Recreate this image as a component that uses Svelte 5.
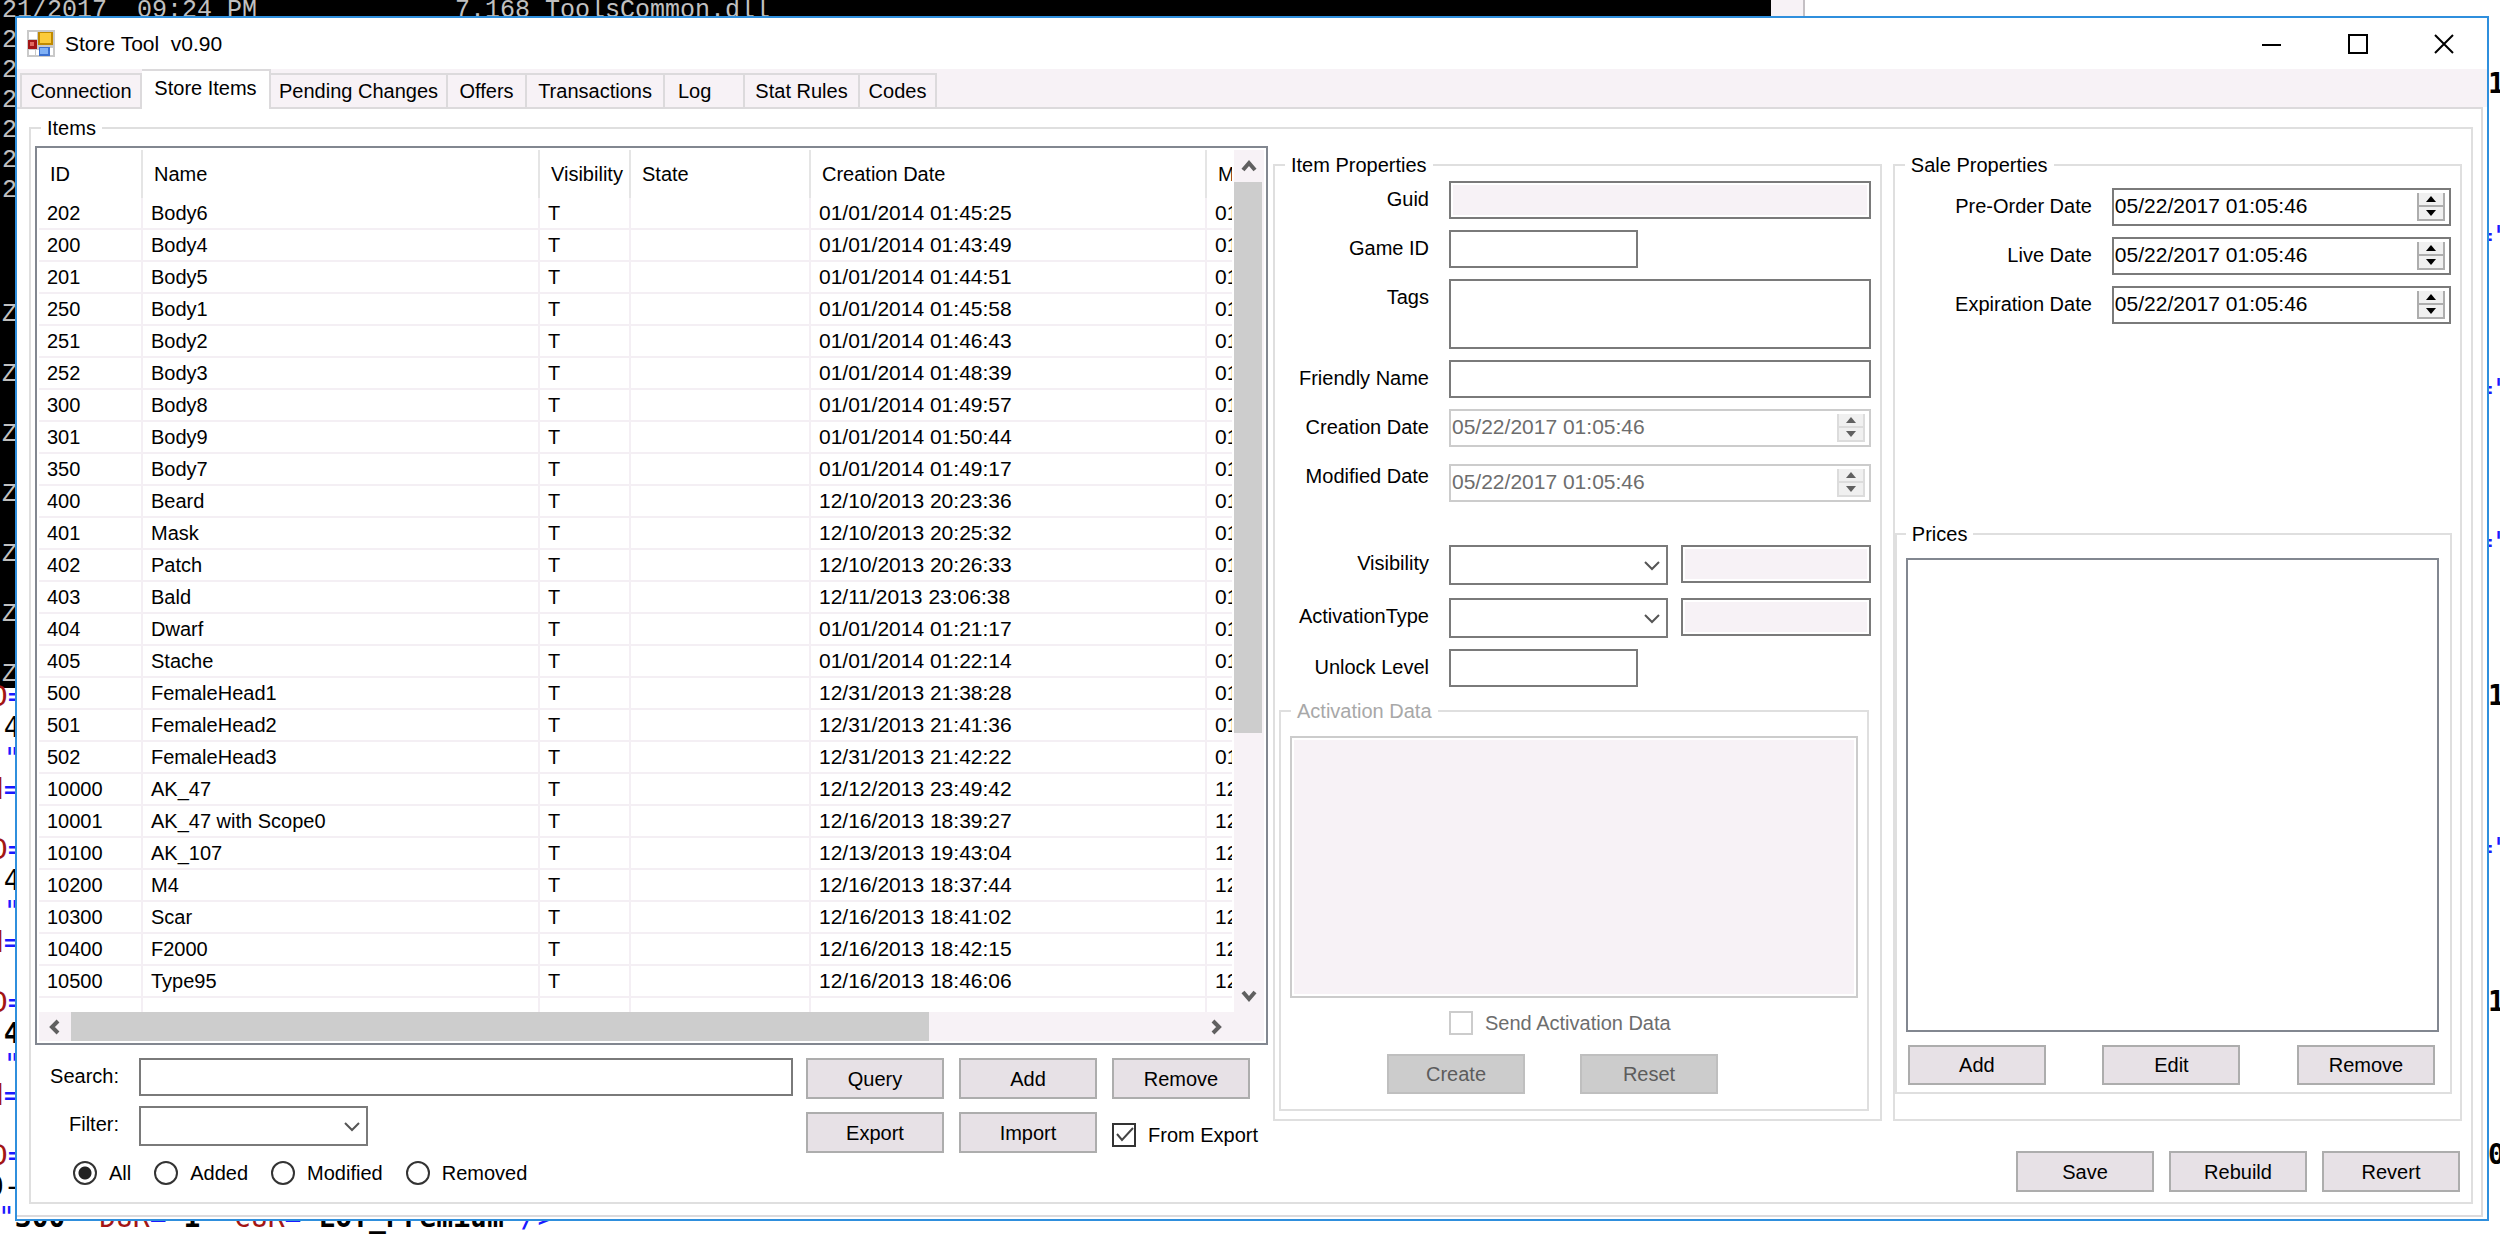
<script>
	const tabs = [
		{ label: 'Connection', width: 122 },
		{ label: 'Store Items', width: 129 },
		{ label: 'Pending Changes', width: 177 },
		{ label: 'Offers', width: 79 },
		{ label: 'Transactions', width: 138 },
		{ label: 'Log', width: 80 },
		{ label: 'Stat Rules', width: 115 },
		{ label: 'Codes', width: 77 }
	];

	const items = [
		['202', 'Body6', '01/01/2014 01:45:25', '01'],
		['200', 'Body4', '01/01/2014 01:43:49', '01'],
		['201', 'Body5', '01/01/2014 01:44:51', '01'],
		['250', 'Body1', '01/01/2014 01:45:58', '01'],
		['251', 'Body2', '01/01/2014 01:46:43', '01'],
		['252', 'Body3', '01/01/2014 01:48:39', '01'],
		['300', 'Body8', '01/01/2014 01:49:57', '01'],
		['301', 'Body9', '01/01/2014 01:50:44', '01'],
		['350', 'Body7', '01/01/2014 01:49:17', '01'],
		['400', 'Beard', '12/10/2013 20:23:36', '01'],
		['401', 'Mask', '12/10/2013 20:25:32', '01'],
		['402', 'Patch', '12/10/2013 20:26:33', '01'],
		['403', 'Bald', '12/11/2013 23:06:38', '01'],
		['404', 'Dwarf', '01/01/2014 01:21:17', '01'],
		['405', 'Stache', '01/01/2014 01:22:14', '01'],
		['500', 'FemaleHead1', '12/31/2013 21:38:28', '01'],
		['501', 'FemaleHead2', '12/31/2013 21:41:36', '01'],
		['502', 'FemaleHead3', '12/31/2013 21:42:22', '01'],
		['10000', 'AK_47', '12/12/2013 23:49:42', '12'],
		['10001', 'AK_47 with Scope0', '12/16/2013 18:39:27', '12'],
		['10100', 'AK_107', '12/13/2013 19:43:04', '12'],
		['10200', 'M4', '12/16/2013 18:37:44', '12'],
		['10300', 'Scar', '12/16/2013 18:41:02', '12'],
		['10400', 'F2000', '12/16/2013 18:42:15', '12'],
		['10500', 'Type95', '12/16/2013 18:46:06', '12']
	];

	const filters = ['All', 'Added', 'Modified', 'Removed'];
	const now = '05/22/2017 01:05:46';

	let activeTab = $state('Store Items');
	let shown = $state('All');
	let fromExport = $state(true);
</script>

{#snippet dateField(id, disabled)}
	<div class="date" class:disabled>
		<input {id} type="text" value={now} {disabled} />
		<div class="spin">
			<button type="button" aria-label="Up" {disabled}>
				<svg width="10" height="6" viewBox="0 0 10 6"><path d="M5 0 L10 6 H0 Z" /></svg>
			</button>
			<button type="button" aria-label="Down" {disabled}>
				<svg width="10" height="6" viewBox="0 0 10 6"><path d="M0 0 H10 L5 6 Z" /></svg>
			</button>
		</div>
	</div>
{/snippet}

{#snippet dropdown(id)}
	<div class="dropdown">
		<select {id}><option value=""></option></select>
		<svg width="16" height="12" viewBox="0 0 16 12"><path d="M1 2 L8 9 L15 2" /></svg>
	</div>
{/snippet}

{#snippet chevron(d)}
	<svg width="18" height="18" viewBox="0 0 18 18"><path {d} /></svg>
{/snippet}

<div class="desktop">
	<div class="console">
		<div class="dir">21/2017&nbsp; 09:24 PM<span>7.168 ToolsCommon.dll</span></div>
		<div class="twos">
			{#each { length: 6 } as _}<span>2</span>{/each}
		</div>
		<div class="zs">
			{#each { length: 7 } as _}<span>Z</span>{/each}
		</div>
	</div>
	<div class="console-scroll"></div>

	<div class="editor left">
		{#each ['-4', '-4', '4', '0-'] as tail, i}
			<div class="block">
				<span><i>D</i><b>=</b></span>
				<span class="shift" class:strong={i === 2}>{i === 2 ? '\u00a0' : ''}{tail}</span>
				{#if i < 3}
					<span class="shift"><b>."</b></span>
					<span class="shift"><i>d</i><b>=</b></span>
				{:else}
					<span class="last"><b>"</b><strong>300</strong><b>"</b> <i>DUR</i><b>="</b><strong>1</strong><b>"</b> <i>CUR</i><b>="</b><strong>LOT_Premium</strong><b>"/&gt;</b></span>
				{/if}
			</div>
		{/each}
	</div>
	<div class="editor right">
		{#each ['1', '="', '="', '="', '1', '="', '1', '0'] as ch}
			<div class="block"><span class:strong={ch.length === 1} class:blue={ch.length > 1}>{ch}</span></div>
		{/each}
	</div>

	<main class="window">
		<header class="titlebar">
			<svg class="app-icon" width="28" height="27" viewBox="0 0 28 27">
				<rect width="28" height="27" fill="#c9c9c9" />
				<rect x="2" y="2" width="8" height="7" fill="#fff" />
				<rect x="2" y="20" width="6" height="5" fill="#fff" />
				<rect x="9" y="20" width="3" height="5" fill="#fff" />
				<rect x="22" y="18" width="4" height="7" fill="#fff" />
				<rect x="11" y="2" width="15" height="13" fill="#c08a00" />
				<rect x="13" y="3" width="11" height="10" fill="#fccb3a" />
				<rect x="1" y="10" width="9" height="9" fill="#a31515" />
				<rect x="3" y="12" width="4" height="4" fill="#e06a60" />
				<rect x="12" y="17" width="11" height="9" fill="#3a6fd0" />
				<rect x="13" y="18" width="8" height="6" fill="#7fb0f5" />
			</svg>
			<h1>Store Tool&nbsp; v0.90</h1>
			<div class="window-buttons">
				<button type="button" aria-label="Minimize">
					<svg width="20" height="20" viewBox="0 0 20 20"><path d="M0 11 H19" /></svg>
				</button>
				<button type="button" aria-label="Maximize">
					<svg width="20" height="20" viewBox="0 0 20 20"><rect x="1" y="1" width="18" height="18" /></svg>
				</button>
				<button type="button" aria-label="Close">
					<svg width="20" height="20" viewBox="0 0 20 20"><path d="M1 1 L19 19 M19 1 L1 19" /></svg>
				</button>
			</div>
		</header>

		<nav class="tabs">
			{#each tabs as tab}
				<button
					type="button"
					class:active={activeTab === tab.label}
					class:short={tab.label === 'Log'}
					style:width="{tab.width}px"
					onclick={() => (activeTab = tab.label)}
				>{tab.label}</button>
			{/each}
		</nav>

		<div class="page">
			<fieldset class="items">
				<legend>Items</legend>
				<div class="columns">
					<section class="list">
						<div class="grid-box">
							<div class="grid-view">
								<table>
									<colgroup>
										<col class="c-id" /><col class="c-name" /><col class="c-vis" />
										<col class="c-state" /><col class="c-created" /><col />
									</colgroup>
									<thead>
										<tr>
											<th>ID</th>
											<th>Name</th>
											<th>Visibility</th>
											<th>State</th>
											<th>Creation Date</th>
											<th>M</th>
										</tr>
									</thead>
									<tbody>
										{#each items as [id, name, created, modified]}
											<tr>
												<td>{id}</td>
												<td>{name}</td>
												<td>T</td>
												<td></td>
												<td class="stamp">{created}</td>
												<td class="stamp">{modified}</td>
											</tr>
										{/each}
										<tr class="rest"><td></td><td></td><td></td><td></td><td></td><td></td></tr>
									</tbody>
								</table>
								<div class="vscroll">
									<button type="button" aria-label="Scroll up">{@render chevron('M3 13 L9 6 L15 13')}</button>
									<div class="vtrack"><div class="vthumb"></div></div>
									<button type="button" aria-label="Scroll down">{@render chevron('M3 5 L9 12 L15 5')}</button>
								</div>
							</div>
							<div class="hscroll">
								<button type="button" aria-label="Scroll left">{@render chevron('M12 3 L6 9 L12 15')}</button>
								<div class="htrack"><div class="hthumb"></div></div>
								<button type="button" aria-label="Scroll right">{@render chevron('M6 3 L12 9 L6 15')}</button>
							</div>
						</div>

						<div class="query">
							<div class="search">
								<label for="search">Search:</label>
								<input id="search" type="text" />
								<label for="filter">Filter:</label>
								<div class="filter">{@render dropdown('filter')}</div>
								<div class="radios">
									{#each filters as name}
										<label><input type="radio" name="shown" value={name} bind:group={shown} />{name}</label>
									{/each}
								</div>
							</div>
							<div class="actions">
								<button type="button" class="btn">Query</button>
								<button type="button" class="btn">Add</button>
								<button type="button" class="btn">Remove</button>
								<button type="button" class="btn">Export</button>
								<button type="button" class="btn">Import</button>
								<label class="check">
									<input type="checkbox" bind:checked={fromExport} />
									<svg width="21" height="21" viewBox="0 0 21 21"><path d="M3 10 L8 16 L19 4" /></svg>
									From Export
								</label>
							</div>
						</div>
					</section>

					<section class="details">
						<div class="groups">
							<fieldset class="item-props">
								<legend>Item Properties</legend>
								<div class="fields">
									<label for="guid">Guid</label>
									<input id="guid" type="text" readonly />
									<label for="game-id">Game ID</label>
									<input id="game-id" class="half" type="text" />
									<label for="tags">Tags</label>
									<textarea id="tags"></textarea>
									<label for="friendly">Friendly Name</label>
									<input id="friendly" type="text" />
									<label for="created">Creation Date</label>
									{@render dateField('created', true)}
									<label for="modified">Modified Date</label>
									<div class="lowered">{@render dateField('modified', true)}</div>
									<label class="spaced" for="visibility">Visibility</label>
									<div class="pair spaced">
										{@render dropdown('visibility')}
										<input type="text" aria-label="Visibility value" readonly />
									</div>
									<label class="activation-type" for="activation">ActivationType</label>
									<div class="pair activation-type">
										{@render dropdown('activation')}
										<input type="text" aria-label="Activation value" readonly />
									</div>
									<label for="unlock">Unlock Level</label>
									<input id="unlock" class="half" type="text" />
								</div>

								<fieldset class="activation" disabled>
									<legend>Activation Data</legend>
									<textarea aria-label="Activation Data"></textarea>
									<label class="check">
										<input type="checkbox" />
										Send Activation Data
									</label>
									<div class="activation-buttons">
										<button type="button" class="btn">Create</button>
										<button type="button" class="btn">Reset</button>
									</div>
								</fieldset>
							</fieldset>

							<fieldset class="sale-props">
								<legend>Sale Properties</legend>
								<div class="fields">
									<label for="preorder">Pre-Order Date</label>
									{@render dateField('preorder', false)}
									<label for="live">Live Date</label>
									{@render dateField('live', false)}
									<label for="expires">Expiration Date</label>
									{@render dateField('expires', false)}
								</div>
								<fieldset class="prices">
									<legend>Prices</legend>
									<div class="price-list"></div>
									<div class="price-buttons">
										<button type="button" class="btn">Add</button>
										<button type="button" class="btn">Edit</button>
										<button type="button" class="btn">Remove</button>
									</div>
								</fieldset>
							</fieldset>
						</div>
						<div class="footer">
							<button type="button" class="btn">Save</button>
							<button type="button" class="btn">Rebuild</button>
							<button type="button" class="btn">Revert</button>
						</div>
					</section>
				</div>
			</fieldset>
		</div>
	</main>
</div>

<style>
	:global(body) {
		background: #fff;
	}

	.desktop {
		position: relative;
		overflow: hidden;
		padding: 16px 11px 15px 15px;
		color: #000;
		font: 20px/24px 'Liberation Sans', Arial, sans-serif;
	}

	.desktop :is(*, *::before, *::after) {
		box-sizing: border-box;
	}

	button,
	input,
	select,
	textarea {
		margin: 0;
		padding: 0;
		border-radius: 0;
		font: inherit;
		color: inherit;
	}

	/* windows lying behind the tool */
	.console {
		position: absolute;
		top: 0;
		left: 0;
		width: 71%;
		height: 688px;
		padding-left: 2px;
		background: #000;
		color: #c0c0c0;
		font: 25px/30px 'Liberation Mono', monospace;
	}

	.dir {
		display: flex;
		gap: 198px;
		margin-top: -4px;
	}

	.twos,
	.zs {
		display: flex;
		flex-direction: column;
	}

	.zs {
		margin-top: 79px;
		line-height: 60px;
	}

	.console-scroll {
		position: absolute;
		top: 0;
		left: 71%;
		width: 34px;
		height: 17px;
		margin-left: -4px;
		background: #f7f2f6;
		border-right: 2px solid #c4c0c4;
	}

	.editor {
		position: absolute;
		font: 28px/31px 'DejaVu Sans Mono', monospace;
		white-space: nowrap;
	}

	.editor.left {
		top: 681px;
		left: -9px;
	}

	.editor.right {
		top: 68px;
		left: calc(100% - 12px);
	}

	.block {
		height: 153px;
	}

	.block > span {
		display: block;
	}

	.editor i {
		color: #a31515;
		font-style: normal;
	}

	.editor b,
	.blue {
		color: #1a1aff;
		font-weight: normal;
	}

	.strong {
		font-weight: bold;
	}

	.shift {
		margin-left: -4px;
	}

	.right .blue {
		margin-left: -12px;
	}

	.last {
		margin-left: 7px;
	}

	/* window frame */
	.window {
		position: relative;
		background: #fff;
		border: 2px solid #2f8fdd;
	}

	.titlebar {
		display: flex;
		align-items: center;
		height: 51px;
		padding-left: 10px;
	}

	h1 {
		margin: 0 0 0 10px;
		font-size: 21px;
		font-weight: normal;
	}

	.window-buttons {
		display: flex;
		margin-left: auto;
	}

	.window-buttons button {
		display: flex;
		align-items: center;
		justify-content: center;
		width: 86px;
		height: 51px;
		background: none;
		border: 0;
	}

	.window-buttons svg {
		fill: none;
		stroke: #000;
		stroke-width: 2;
	}

	.tabs {
		display: flex;
		align-items: flex-end;
		height: 38px;
		padding-left: 3px;
		background: #f7f2f6;
	}

	.tabs button {
		height: 34px;
		background: #f7f2f6;
		border: solid #dcdadc;
		border-width: 2px 2px 0 0;
		white-space: nowrap;
	}

	.tabs button:first-child {
		border-left-width: 2px;
	}

	.tabs button.active {
		z-index: 1;
		height: 40px;
		margin-bottom: -2px;
		padding-bottom: 4px;
		background: #fff;
	}

	.tabs button.short {
		padding-left: 13px;
		text-align: left;
	}

	.page {
		margin: 0 4px 2px 0;
		padding: 7px 8px 11px 12px;
		border: solid #dcdadc;
		border-width: 2px 2px 2px 0;
	}

	/* group boxes */
	fieldset {
		min-width: 0;
		margin: 0;
		padding: 0;
		border: 2px solid #dfdfdf;
	}

	legend {
		margin-left: 10px;
		padding: 0 6px;
		line-height: 24px;
	}

	.items {
		padding: 6px 9px 10px 4px;
	}

	.items > legend {
		margin-left: 6px;
	}

	.columns {
		display: flex;
		gap: 5px;
	}

	.list {
		flex: 1233 1 0;
		min-width: 0;
	}

	.details {
		display: flex;
		flex: 1189 1 0;
		flex-direction: column;
		min-width: 0;
		padding-top: 7px;
	}

	/* item grid */
	.grid-box {
		padding: 2px;
		border: 2px solid #828790;
	}

	.grid-view {
		display: flex;
	}

	table {
		flex: 1;
		width: 0;
		margin-right: 2px;
		table-layout: fixed;
		border-collapse: separate;
		border-spacing: 0;
	}

	.c-id {
		width: 104px;
	}

	.c-name {
		width: 397px;
	}

	.c-vis {
		width: 91px;
	}

	.c-state {
		width: 180px;
	}

	.c-created {
		width: 396px;
	}

	th {
		height: 48px;
		padding: 0 0 0 11px;
		border-right: 2px solid #e5e5e5;
		font-weight: normal;
		text-align: left;
		overflow: hidden;
		white-space: nowrap;
	}

	td {
		height: 32px;
		padding: 0 0 0 8px;
		border: solid #f4eff4;
		border-width: 0 2px 2px 0;
		line-height: 24px;
		overflow: hidden;
		white-space: nowrap;
	}

	.stamp {
		font-size: 21px;
	}

	.rest td {
		height: 14px;
		border-bottom: 0;
	}

	th:last-child,
	td:last-child {
		border-right: 0;
	}

	.vscroll {
		display: flex;
		flex-direction: column;
		width: 30px;
		background: #f7f2f6;
	}

	.vscroll button,
	.hscroll button {
		display: flex;
		align-items: center;
		justify-content: center;
		width: 30px;
		height: 32px;
		background: none;
		border: 0;
	}

	.vscroll svg,
	.hscroll svg {
		fill: none;
		stroke: #606060;
		stroke-width: 4;
	}

	.vtrack {
		flex: 1;
	}

	.vthumb {
		width: 28px;
		height: 69%;
		background: #cdcdcd;
	}

	.hscroll {
		display: flex;
		height: 29px;
		padding-right: 32px;
		background: #f7f2f6;
	}

	.hscroll button {
		width: 32px;
		height: 29px;
	}

	.htrack {
		flex: 1;
	}

	.hthumb {
		width: 76%;
		height: 29px;
		background: #cdcdcd;
	}

	/* controls */
	input[type='text'],
	textarea,
	select {
		display: block;
		width: 100%;
		height: 38px;
		background: #fff;
		border: 2px solid #7a7a7a;
	}

	textarea {
		height: 70px;
		resize: none;
	}

	input[readonly] {
		background: #f7f2f6;
		box-shadow: inset 0 0 0 2px #fff;
	}

	.dropdown {
		position: relative;
	}

	select {
		height: 40px;
		appearance: none;
	}

	.dropdown svg {
		position: absolute;
		top: 15px;
		right: 8px;
		fill: none;
		stroke: #555;
		stroke-width: 2;
		pointer-events: none;
	}

	.btn {
		width: 138px;
		height: 40px;
		background: #e7e1e6;
		border: 2px solid #adadad;
	}

	.btn:disabled {
		background: #ccc;
		border-color: #bfbfbf;
		color: #5c5c5c;
	}

	input[type='radio'],
	input[type='checkbox'] {
		flex: none;
		width: 24px;
		height: 24px;
		appearance: none;
		background: #fff;
		border: 2px solid #333;
	}

	input[type='radio'] {
		border-radius: 50%;
	}

	input[type='radio']:checked {
		background: radial-gradient(circle, #222 6px, #fff 7px);
	}

	.check {
		position: relative;
		display: flex;
		align-items: center;
		gap: 12px;
		white-space: nowrap;
	}

	.check svg {
		position: absolute;
		left: 2px;
		fill: none;
		stroke: #444;
		stroke-width: 2;
		pointer-events: none;
	}

	.date {
		display: flex;
		align-items: center;
		height: 38px;
		padding-right: 4px;
		background: #fff;
		border: 2px solid #7a7a7a;
		font-size: 21px;
	}

	.date input[type='text'] {
		flex: 1;
		min-width: 0;
		height: 32px;
		padding: 0 0 2px 1px;
		border: 0;
	}

	.spin {
		width: 28px;
	}

	.spin button {
		display: flex;
		align-items: center;
		justify-content: center;
		width: 28px;
		height: 14px;
		background: #f0f0f0;
		border: solid #adadad;
		border-width: 0 2px 2px;
	}

	.date.disabled {
		border-color: #ccc;
		color: #6d6d6d;
	}

	.date.disabled svg {
		fill: #606060;
	}

	.date.disabled button {
		border-color: #dcdcdc;
	}

	/* below the grid */
	.query {
		display: flex;
		gap: 13px;
		padding: 13px 18px 0 0;
	}

	.search {
		display: grid;
		flex: 1;
		grid-template-columns: 104px 1fr;
		align-content: start;
		row-gap: 10px;
	}

	.search > label {
		padding-right: 20px;
		line-height: 36px;
		text-align: right;
	}

	.filter {
		width: 229px;
	}

	.radios {
		display: flex;
		grid-column: 1 / -1;
		gap: 23px;
		padding: 5px 0 0 38px;
	}

	.radios label {
		display: flex;
		align-items: center;
		gap: 12px;
	}

	.actions {
		display: grid;
		grid-template-columns: repeat(3, 138px);
		align-content: start;
		gap: 13px 15px;
	}

	.actions .btn {
		height: 41px;
	}

	.actions .check {
		padding-top: 4px;
	}

	/* right side groups */
	.groups {
		display: flex;
		gap: 11px;
	}

	.item-props {
		flex: 609 1 0;
		padding-bottom: 8px;
	}

	.sale-props {
		flex: 569 1 0;
	}

	.fields {
		display: grid;
		grid-template-columns: 174px 1fr;
		row-gap: 11px;
		padding: 4px 9px 0 0;
	}

	.fields > label {
		padding-right: 20px;
		line-height: 36px;
		text-align: right;
	}

	.sale-props .fields {
		grid-template-columns: 217px 1fr;
		padding-top: 11px;
	}

	.half[type='text'] {
		width: 189px;
	}

	.lowered {
		padding-top: 6px;
	}

	.spaced {
		margin-top: 32px;
	}

	.activation-type {
		margin-top: 2px;
	}

	.pair {
		display: grid;
		grid-template-columns: 1fr 190px;
		gap: 13px;
	}

	.activation {
		margin: 12px 11px 0 4px;
		padding: 13px 9px 15px;
	}

	.activation legend {
		margin-left: 1px;
		color: #a8a8a8;
	}

	.activation textarea {
		height: 262px;
		background: #f7f2f6;
		border-color: #ccc;
		box-shadow: inset 0 0 0 2px #fff;
	}

	.activation .check {
		padding: 13px 0 0 159px;
		color: #6d6d6d;
	}

	.activation .check input {
		border-color: #ccc;
	}

	.activation-buttons {
		display: flex;
		gap: 55px;
		padding: 19px 0 0 97px;
	}

	.prices {
		margin: 198px 8px 0 0;
		padding: 12px 11px 7px 9px;
	}

	.prices legend {
		margin-left: 0;
	}

	.price-list {
		height: 474px;
		border: 2px solid #828790;
	}

	.price-buttons {
		display: flex;
		justify-content: space-between;
		padding: 13px 4px 0 2px;
	}

	.footer {
		display: flex;
		justify-content: flex-end;
		gap: 15px;
		padding: 30px 2px 0 0;
	}

	.footer .btn {
		height: 41px;
	}
</style>
